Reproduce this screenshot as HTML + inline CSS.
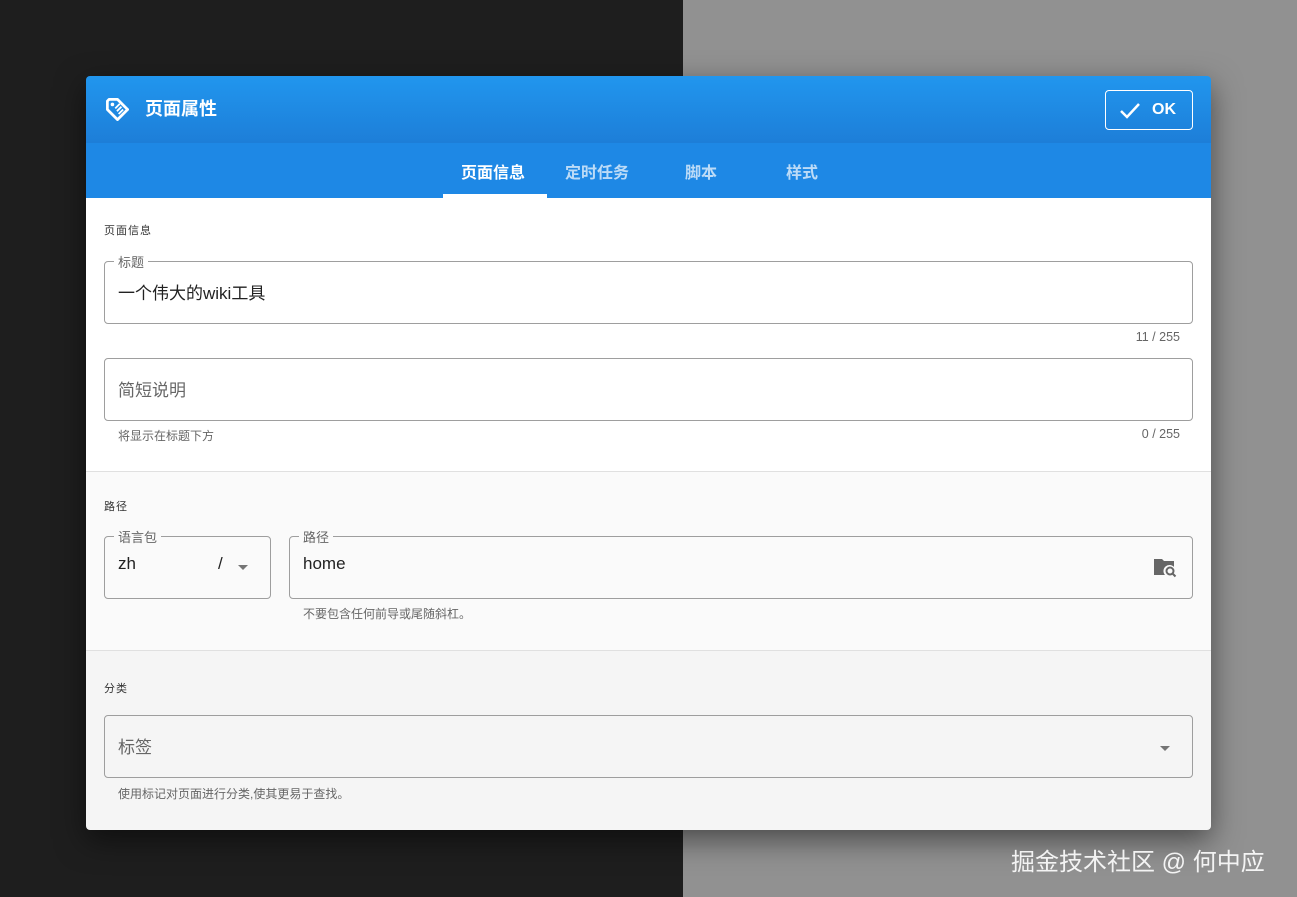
<!DOCTYPE html>
<html><head><meta charset="utf-8"><style>
*{box-sizing:border-box;margin:0;padding:0}
body{width:1297px;height:897px;overflow:hidden;font-family:"Liberation Sans","Noto Sans CJK SC",sans-serif;background:linear-gradient(90deg,#1e1e1e 0,#1e1e1e 683px,#919191 683px);position:relative}
.dlg{position:absolute;left:86px;top:76px;width:1125px;height:754px;border-radius:4px;overflow:hidden;box-shadow:0 10px 30px rgba(0,0,0,.5)}
.hdr{height:67px;background:linear-gradient(180deg,#2196ee,#1d7ed8);position:relative;color:#fff}
.hdr .t{position:absolute;left:59px;top:19px;font-size:18px;font-weight:bold}
.ok{position:absolute;left:1019px;top:14px;width:88px;height:40px;border:1px solid #fff;border-radius:4px;color:#fff;font-weight:bold;font-size:16px}
.ok span{position:absolute;left:46px;top:10px}
.tabs{height:55px;background:#1e88e5;position:relative;color:rgba(255,255,255,.7);font-size:16px;font-weight:bold}
.tab{position:absolute;top:16px}
.sec{position:absolute;left:0;width:1125px}
.lbl{position:absolute;left:18px;font-size:11px;color:#333;letter-spacing:1px}
.fld{position:absolute;border:1px solid #9e9e9e;border-radius:4px;height:63px}
.fld .l{position:absolute;top:-10px;left:9px;padding:0 4px;font-size:13px;color:#666}
.fld .v{position:absolute;left:13px;top:17px;font-size:17px;color:#222}
.hint{position:absolute;font-size:12px;color:#666}
.cnt{position:absolute;font-size:12.5px;color:#666;right:31px}
.arr{position:absolute;width:0;height:0;border-left:5px solid transparent;border-right:5px solid transparent;border-top:5px solid #757575}
</style></head><body>
<div class="dlg">
<div class="hdr">
<svg style="position:absolute;left:18px;top:20px" width="27" height="27" viewBox="0 0 24 24"><path d="M3 4.5 L4.5 3 L12 3 L21 12 L12 21 L3 12 Z" fill="none" stroke="#fff" stroke-width="2.4" stroke-linejoin="round"/><circle cx="7.5" cy="7.5" r="1.6" fill="#fff"/><path d="M10 11l4-4M11.5 13.5l4-4M13 16l4-4" stroke="#fff" stroke-width="1.6"/></svg>
<div class="t">页面属性</div>
<div class="ok"><svg style="position:absolute;left:13px;top:10px" width="22" height="20" viewBox="0 0 22 20"><path d="M2 10l6 6L20 3" fill="none" stroke="#fff" stroke-width="2.5"/></svg><span>OK</span></div>
</div>
<div class="tabs">
<div class="tab" style="left:375px;color:#fff">页面信息</div>
<div style="position:absolute;left:357px;top:51px;width:104px;height:4px;background:#fff"></div>
<div class="tab" style="left:479px">定时任务</div>
<div class="tab" style="left:599px">脚本</div>
<div class="tab" style="left:700px">样式</div>
</div>
<div class="sec" style="top:122px;height:274px;background:#fff;border-bottom:1px solid #e0e0e0">
<div class="lbl" style="top:24px">页面信息</div>
<div class="fld" style="left:18px;top:63px;width:1089px"><div class="l" style="background:#fff">标题</div><div class="v">一个伟大的wiki工具</div></div>
<div class="cnt" style="top:132px">11 / 255</div>
<div class="fld" style="left:18px;top:160px;width:1089px"><div class="v" style="color:#666">简短说明</div></div>
<div class="hint" style="left:32px;top:229px">将显示在标题下方</div>
<div class="cnt" style="top:229px">0 / 255</div>
</div>
<div class="sec" style="top:396px;height:179px;background:#fafafa;border-bottom:1px solid #e0e0e0">
<div class="lbl" style="top:26px">路径</div>
<div class="fld" style="left:18px;top:64px;width:167px"><div class="l" style="background:#fafafa">语言包</div><div class="v">zh</div><div style="position:absolute;left:113px;top:17px;font-size:17px;color:#222">/</div><div class="arr" style="left:133px;top:28px"></div></div>
<div class="fld" style="left:203px;top:64px;width:904px"><div class="l" style="background:#fafafa">路径</div><div class="v">home</div>
<svg style="position:absolute;left:863px;top:19px" width="26" height="24" viewBox="0 0 26 24"><path d="M1 3h8l2 2h10v6a6 6 0 0 0-9 8H1z" fill="#666"/><circle cx="17" cy="15" r="3.5" fill="none" stroke="#666" stroke-width="2"/><path d="M19.5 17.5l3 3" stroke="#666" stroke-width="2"/></svg></div>
<div class="hint" style="left:217px;top:133px">不要包含任何前导或尾随斜杠。</div>
</div>
<div class="sec" style="top:575px;height:179px;background:#f5f5f5">
<div class="lbl" style="top:29px">分类</div>
<div class="fld" style="left:18px;top:64px;width:1089px"><div class="v" style="color:#666">标签</div><div class="arr" style="left:1055px;top:30px"></div></div>
<div class="hint" style="left:32px;top:134px">使用标记对页面进行分类,使其更易于查找。</div>
</div>
</div>
<div style="position:absolute;left:1011px;top:842px;font-size:24px;color:#fff;opacity:.9">掘金技术社区 @ 何中应</div>
</body></html>
